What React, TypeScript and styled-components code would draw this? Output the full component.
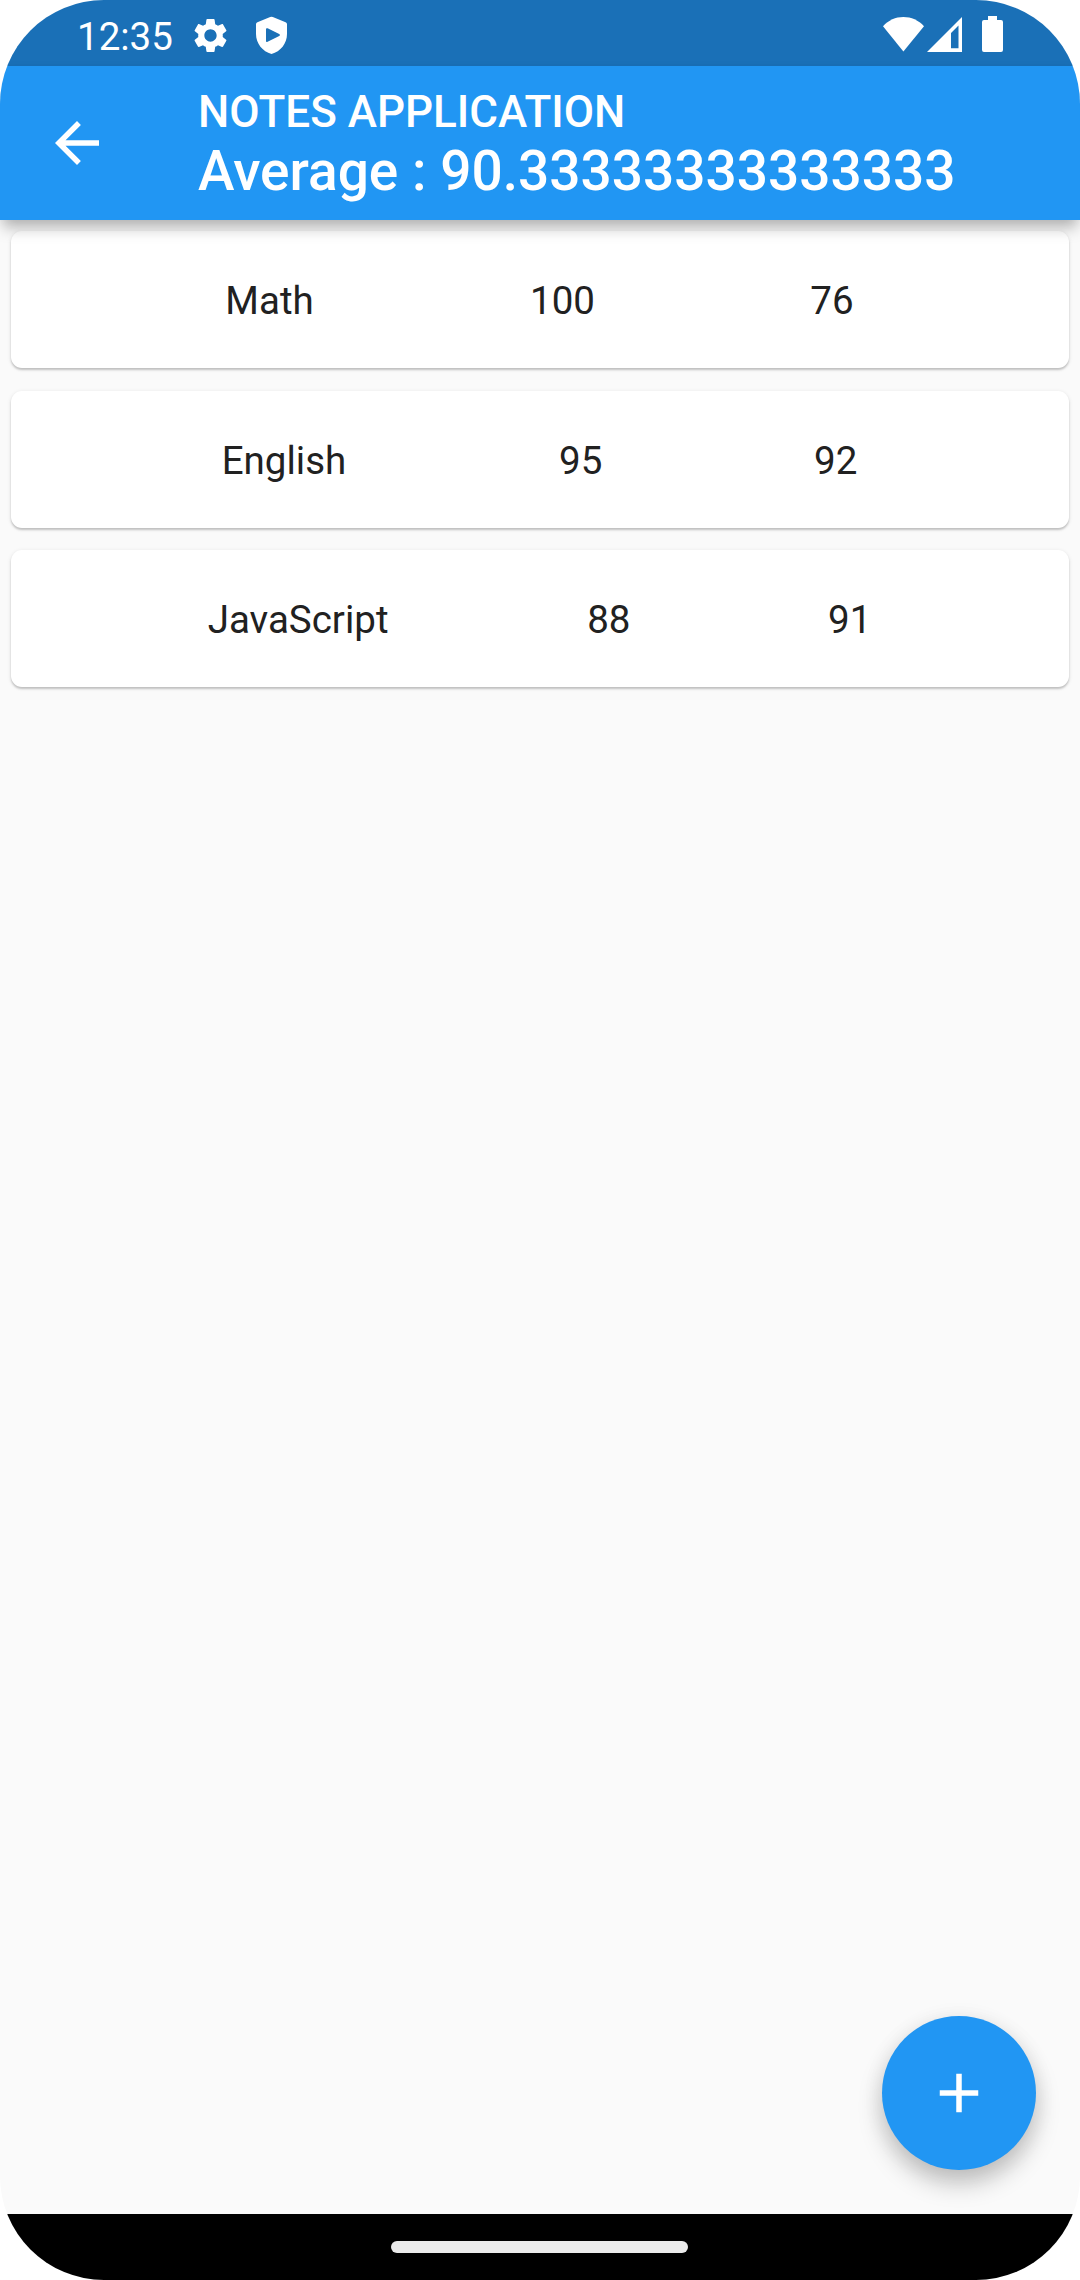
import React from "react";
import styled, { createGlobalStyle } from "styled-components";

const GlobalStyle = createGlobalStyle`
  * { box-sizing: border-box; }
  html, body { margin: 0; padding: 0; background: #fff; }
  body { font-family: Roboto, "Noto Sans", sans-serif; }
`;

const Screen = styled.div`
  position: relative;
  display: flex;
  flex-direction: column;
  width: 1080px;
  height: 2280px;
  overflow: hidden;
  background: #fafafa;
  border-radius: 104px;
`;

const StatusBar = styled.header`
  display: flex;
  align-items: flex-start;
  justify-content: space-between;
  height: 66px;
  flex: none;
  padding: 0 77px;
  background: #1a70b7;
  color: #fff;
`;

const StatusGroup = styled.div`
  display: flex;
  align-items: flex-start;
`;

const Clock = styled.span`
  font-size: 38.5px;
  line-height: 46px;
  margin-top: 14px;
  width: 113px;
  white-space: nowrap;
`;

const Glyph = styled.svg<{ $top: number; $left?: number }>`
  display: block;
  flex: none;
  margin-top: ${(p) => p.$top}px;
  margin-left: ${(p) => p.$left ?? 0}px;
  fill: currentColor;
`;

const AppBar = styled.div`
  position: relative;
  z-index: 1;
  display: flex;
  align-items: center;
  flex: none;
  height: 154px;
  background: #2196f3;
  color: #fff;
  box-shadow:
    0 11px 14px -3px rgba(0, 0, 0, 0.25),
    0 3px 12px -2px rgba(0, 0, 0, 0.08);
`;

const BackButton = styled.button`
  display: flex;
  align-items: center;
  justify-content: center;
  width: 154px;
  height: 154px;
  padding: 0;
  border: 0;
  background: none;
  color: inherit;
`;

const Titles = styled.div`
  display: flex;
  flex-direction: column;
  margin-left: 44px;
  padding-top: 3px;
  font-weight: 500;
  white-space: nowrap;
`;

const Title = styled.span`
  font-size: 44px;
  line-height: 52px;
`;

const Average = styled.span`
  font-size: 55px;
  line-height: 66px;
`;

const List = styled.main`
  display: flex;
  flex-direction: column;
  flex: 1;
  gap: 22.5px;
  padding: 11px;
`;

const Card = styled.div`
  display: flex;
  align-items: center;
  justify-content: space-evenly;
  height: 137px;
  border-radius: 11px;
  background: #fff;
  box-shadow:
    0 2px 2px rgba(0, 0, 0, 0.18),
    0 1px 4px rgba(0, 0, 0, 0.1);
`;

const Cell = styled.span`
  padding-top: 2px;
  color: #212121;
  font-size: 38.5px;
  line-height: 45px;

  &:first-child {
    margin: 0 1px 0 -1px;
  }
`;

const AddButton = styled.button`
  position: absolute;
  right: 44px;
  bottom: 110px;
  display: flex;
  align-items: center;
  justify-content: center;
  width: 154px;
  height: 154px;
  padding: 0;
  border: 0;
  border-radius: 50%;
  background: #2196f3;
  color: #fff;
  box-shadow:
    0 14px 24px rgba(0, 0, 0, 0.22),
    0 3px 22px rgba(0, 0, 0, 0.07);
`;

const NavigationBar = styled.footer`
  display: flex;
  align-items: center;
  justify-content: center;
  flex: none;
  height: 66px;
  padding-right: 2px;
  background: #000;
`;

const GestureHandle = styled.div`
  width: 297px;
  height: 11.5px;
  border-radius: 6px;
  background: #ebebeb;
`;

const notes = [
  { lesson: "Math", first: 100, second: 76 },
  { lesson: "English", first: 95, second: 92 },
  { lesson: "JavaScript", first: 88, second: 91 },
];

const average = "90.33333333333333";

export default function App() {
  return (
    <>
      <GlobalStyle />
      <Screen>
        <StatusBar>
          <StatusGroup>
            <Clock>12:35</Clock>
            <Glyph $top={15} width="41" height="41" viewBox="0 0 24 24">
              <path d="M19.14 12.94c.04-.3.06-.61.06-.94 0-.32-.02-.64-.07-.94l2.03-1.58c.18-.14.23-.41.12-.61l-1.92-3.32c-.12-.22-.37-.29-.59-.22l-2.39.96c-.5-.38-1.03-.7-1.62-.94l-.36-2.54c-.04-.24-.24-.41-.48-.41h-3.84c-.24 0-.43.17-.47.41l-.36 2.54c-.59.24-1.13.57-1.62.94l-2.39-.96c-.22-.08-.47 0-.59.22L2.74 8.87c-.12.21-.08.47.12.61l2.03 1.58c-.05.3-.09.63-.09.94s.02.64.07.94l-2.03 1.58c-.18.14-.23.41-.12.61l1.92 3.32c.12.22.37.29.59.22l2.39-.96c.5.38 1.03.7 1.62.94l.36 2.54c.05.24.24.41.48.41h3.84c.24 0 .44-.17.47-.41l.36-2.54c.59-.24 1.13-.56 1.62-.94l2.39.96c.22.08.47 0 .59-.22l1.92-3.32c.12-.22.07-.47-.12-.61l-2.01-1.58zM12 15.6c-1.98 0-3.6-1.62-3.6-3.6s1.62-3.6 3.6-3.6 3.6 1.62 3.6 3.6-1.62 3.6-3.6 3.6z" />
            </Glyph>
            <Glyph $top={16} $left={24} width="33" height="39" viewBox="255 16 33 39">
              <path
                fillRule="evenodd"
                d="M270.2 17Q271.5 16.3 272.8 17L285.6 22.2Q287 22.8 287 24.2V34C287 43.5 280.5 51.5 271.5 54C262.5 51.5 256 43.5 256 34V24.2Q256 22.8 257.4 22.2ZM266 29.2V41Q266 42.3 267.6 41.7L279.2 36Q281 35 279.2 34.1L267.6 28.3Q266 27.7 266 29.2Z"
              />
            </Glyph>
          </StatusGroup>
          <StatusGroup>
            <Glyph $top={16} width="42" height="36" viewBox="883 16 42 36">
              <path d="M883 26.2C888.5 20.3 895.5 17.1 903.4 17.1S918.5 20.3 924 26.2L903.4 51.5Z" />
            </Glyph>
            <Glyph $top={16} $left={2} width="36" height="36" viewBox="927 16 36 36">
              <path fillRule="evenodd" d="M927 52L962 17V52ZM951 33V48.3H958.5V25.5Z" />
            </Glyph>
            <Glyph $top={16} $left={19} width="21" height="36" viewBox="0 0 21 36">
              <path d="M6 0H15V4H19Q21 4 21 6V34Q21 36 19 36H2Q0 36 0 34V6Q0 4 2 4H6Z" />
            </Glyph>
          </StatusGroup>
        </StatusBar>

        <AppBar>
          <BackButton aria-label="Back">
            <svg width="66" height="66" viewBox="0 0 24 24" fill="currentColor">
              <path d="M20 11H7.83l5.59-5.59L12 4l-8 8 8 8 1.41-1.41L7.83 13H20v-2z" />
            </svg>
          </BackButton>
          <Titles>
            <Title>NOTES APPLICATION</Title>
            <Average>Average : {average}</Average>
          </Titles>
        </AppBar>

        <List>
          {notes.map((note) => (
            <Card key={note.lesson}>
              <Cell>{note.lesson}</Cell>
              <Cell>{note.first}</Cell>
              <Cell>{note.second}</Cell>
            </Card>
          ))}
        </List>

        <NavigationBar>
          <GestureHandle />
        </NavigationBar>

        <AddButton aria-label="Add note">
          <svg width="66" height="66" viewBox="0 0 24 24" fill="currentColor">
            <path d="M19 13h-6v6h-2v-6H5v-2h6V5h2v6h6v2z" />
          </svg>
        </AddButton>
      </Screen>
    </>
  );
}
